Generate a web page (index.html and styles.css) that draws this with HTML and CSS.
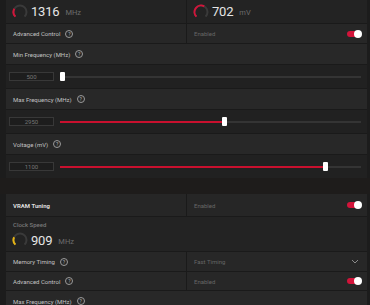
FILE: index.html
```html
<!DOCTYPE html>
<html lang="en">
<head>
  <meta charset="UTF-8">
  <link rel="stylesheet" href="styles.css">
</head>
<body>
  <div class="panel">
    <div class="row split gauge-row">
      <div class="cell">
        <svg class="ring" viewBox="0 0 16 16" width="16" height="16">
          <path d="M3.4 12.6 A6.5 6.5 0 1 1 12.6 12.6" class="ring-track"/>
          <path d="M3.4 12.6 A6.5 6.5 0 0 1 2.37 4.75" class="ring-red"/>
        </svg>
        <span class="big">1316</span><span class="unit">MHz</span>
      </div>
      <div class="cell">
        <svg class="ring" viewBox="0 0 16 16" width="16" height="16">
          <path d="M3.4 12.6 A6.5 6.5 0 1 1 12.6 12.6" class="ring-track"/>
          <path d="M3.4 12.6 A6.5 6.5 0 0 1 11.25 2.37" class="ring-red"/>
        </svg>
        <span class="big">702</span><span class="unit">mV</span>
      </div>
    </div>

    <div class="row split opt-row">
      <div class="cell">Advanced Control <span class="help">?</span></div>
      <div class="cell"><span class="dim">Enabled</span><span class="toggle"></span></div>
    </div>

    <div class="row head-row">Min Frequency (MHz) <span class="help">?</span></div>
    <div class="row slider-row">
      <span class="box">500</span>
      <div class="track"><div class="fill" style="width:0%"></div><span class="thumb" style="left:0%"></span></div>
    </div>

    <div class="row head-row">Max Frequency (MHz) <span class="help">?</span></div>
    <div class="row slider-row">
      <span class="box">2950</span>
      <div class="track"><div class="fill" style="width:53.7%"></div><span class="thumb" style="left:53.7%"></span></div>
    </div>

    <div class="row head-row">Voltage (mV) <span class="help">?</span></div>
    <div class="row slider-row">
      <span class="box">1100</span>
      <div class="track"><div class="fill" style="width:87.3%"></div><span class="thumb" style="left:87.3%"></span></div>
    </div>
  </div>

  <div class="spacer"></div>

  <div class="panel">
    <div class="row split vram-row">
      <div class="cell"><b>VRAM Tuning</b></div>
      <div class="cell"><span class="dim">Enabled</span><span class="toggle"></span></div>
    </div>

    <div class="row clock-row">
      <div class="clock-label">Clock Speed</div>
      <div class="clock-value">
        <svg class="ring" viewBox="0 0 16 16" width="16" height="16">
          <path d="M3.4 12.6 A6.5 6.5 0 1 1 12.6 12.6" class="ring-track"/>
          <path d="M3.4 12.6 A6.5 6.5 0 0 1 2.11 5.25" class="ring-yellow"/>
        </svg>
        <span class="big">909</span><span class="unit">MHz</span>
      </div>
    </div>

    <div class="row split mem-row">
      <div class="cell">Memory Timing <span class="help">?</span></div>
      <div class="cell">
        <span class="dim">Fast Timing</span>
        <svg class="chev" viewBox="0 0 8 5" width="8" height="5"><path d="M1 1 L4 4 L7 1"/></svg>
      </div>
    </div>

    <div class="row split adv-row">
      <div class="cell">Advanced Control <span class="help">?</span></div>
      <div class="cell"><span class="dim">Enabled</span><span class="toggle"></span></div>
    </div>

    <div class="row head-row">Max Frequency (MHz) <span class="help">?</span></div>
  </div>
</body>
</html>
```

FILE: styles.css
```css
body{
	margin:0;
	height:305px;
	overflow:hidden;
	background:#1c1c1c;
	font-family:Roboto, "Liberation Sans", sans-serif;
	font-size:6px;
	color:#c2c2c2;
}
.panel{
	margin:0 3px 0 6px;
	display:flex;
	flex-direction:column;
	gap:1px;
	background:#1a1a1a;
}
.spacer{
	height:16px;
	background:#1e1c1b;
}
.row{
	display:flex;
	align-items:center;
}
.split{
	gap:1px;
	align-items:stretch;
}
.split .cell{
	flex:1;
	display:flex;
	align-items:center;
	padding:0 6px 0 7px;
	background:#272727;
}
.gauge-row{height:23px;}
.gauge-row .cell{
	background:#232323;
	padding-left:6px;
	gap:3px;
}
.opt-row{height:19px;}
.vram-row{height:22px;}
.vram-row .cell{background:#262626;}
.vram-row b{color:#dedede;}
.mem-row{height:19px;}
.adv-row{height:18px;}

.head-row{
	height:20px;
	padding-left:7px;
	background:#282828;
}
.slider-row{
	height:23px;
	padding:0 6px 0 3px;
	background:#212121;
}

.big{
	font-size:13px;
	color:#e6e6e6;
	letter-spacing:-0.2px;
}
.unit{
	font-size:7.5px;
	color:#6c6c6c;
	margin-left:3px;
	align-self:center;
	padding-top:2px;
}
.dim{color:#666;}

.ring{display:block;}
.ring path{fill:none;stroke-width:2;}
.ring-track{stroke:#3a3a3a;}
.ring-red{stroke:#d2143a;}
.ring-yellow{stroke:#e5b415;}

.help{
	display:inline-flex;
	align-items:center;
	justify-content:center;
	width:6px;
	height:6px;
	margin-left:5px;
	border:1px solid #9a9a9a;
	border-radius:50%;
	font-size:5px;
	color:#bdbdbd;
}

.toggle{
	position:relative;
	width:14px;
	height:6px;
	margin-left:auto;
	border-radius:3px;
	background:#d2143a;
}
.toggle::after{
	content:"";
	position:absolute;
	right:-1px;
	top:-1px;
	width:8px;
	height:8px;
	border-radius:50%;
	background:#fff;
}

.box{
	width:43px;
	height:7px;
	line-height:7px;
	border:1px solid #383838;
	background:#1d1d1d;
	text-align:center;
	color:#767676;
}
.track{
	position:relative;
	flex:1;
	height:2px;
	margin-left:6px;
	background:#343434;
}
.fill{
	height:2px;
	background:#c8102e;
}
.thumb{
	position:absolute;
	top:-4px;
	width:5px;
	height:9px;
	border-radius:1px;
	background:#fff;
}

.clock-row{
	height:34px;
	flex-direction:column;
	align-items:flex-start;
	padding-left:6px;
	background:#232323;
}
.clock-label{
	margin-top:4px;
	padding-left:1px;
	line-height:8px;
	color:#787878;
	font-weight:500;
}
.clock-value{
	display:flex;
	align-items:center;
	gap:3px;
	margin-top:3px;
}

.chev{
	margin-left:auto;
	margin-right:2px;
}
.chev path{
	fill:none;
	stroke:#8a8a8a;
	stroke-width:1;
}
```
